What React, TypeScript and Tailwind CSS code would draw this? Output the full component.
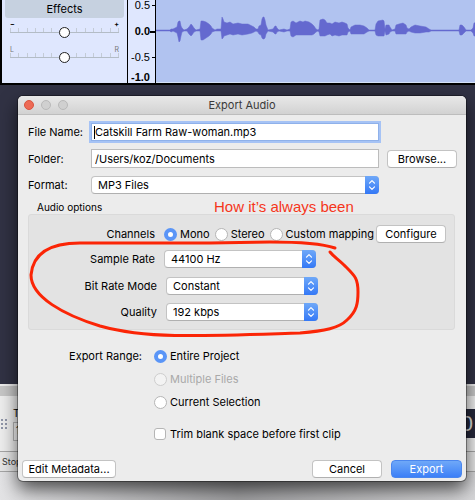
import React, { useId } from "react";

const buttonClass =
  "h-[18px] rounded-[4px] border border-[#c3c3c3] border-b-[#b0b0b0] bg-white text-center text-[11px] leading-4 whitespace-nowrap text-black";

/* x, height above the axis, height below the axis */
const envelope: [number, number, number][] = [
  [0, 0, 1], [14, 0, 1], [15, 1, 2], [17, 1, 1], [19, 2, 2], [21, 3, 3], [22, 8, 7], [23, 9, 12], [24, 9, 11], [25, 4, 6], [26, 2, 2], [28, 0, 1],
  [31, 1, 1], [33, 3, 4], [35, 6, 6], [36, 5, 5], [38, 2, 2], [40, 0, 1], [44, 1, 1], [45, 9, 10], [47, 9, 10], [50, 8, 8], [53, 6, 6], [55, 4, 4], [56, 2, 2],
  [59, 0, 1], [61, 1, 1], [65, 1, 1], [66, 13, 9], [67, 11, 8], [68, 8, 6], [71, 7, 5], [74, 8, 4], [77, 6, 5], [82, 7, 4], [86, 6, 5], [92, 6, 4],
  [96, 4, 3], [98, 3, 2], [100, 1, 1], [102, 1, 2], [103, 4, 4], [105, 5, 5], [106, 11, 8], [107, 13, 9], [108, 13, 9], [109, 10, 8], [110, 5, 4], [112, 0, 1],
  [117, 1, 2], [119, 4, 4], [120, 4, 4], [121, 2, 2], [123, 0, 1], [128, 1, 2], [131, 0, 1], [134, 1, 1], [135, 8, 6], [137, 9, 7], [140, 7, 5], [144, 9, 5],
  [147, 8, 5], [149, 9, 5], [153, 8, 5], [156, 6, 5], [158, 4, 4], [160, 1, 2], [162, 0, 1], [163, 1, 2], [164, 10, 6], [167, 11, 6], [169, 10, 6], [171, 7, 5],
  [174, 7, 4], [176, 6, 6], [179, 8, 5], [183, 7, 6], [186, 8, 5], [189, 7, 5], [191, 6, 5], [192, 2, 2], [194, 0, 1], [195, 3, 4], [199, 5, 4], [204, 5, 4],
  [208, 4, 4], [211, 2, 2], [213, 0, 1], [219, 0, 1], [220, 6, 5], [222, 9, 6], [227, 10, 6], [228, 9, 6], [229, 1, 1], [230, 5, 5], [233, 5, 4], [234, 3, 2],
  [236, 0, 1], [239, 1, 1], [240, 5, 4], [243, 6, 4], [247, 7, 4], [250, 5, 4], [251, 2, 2], [253, 1, 1], [255, 3, 2], [259, 5, 3], [264, 4, 3], [270, 3, 2],
  [273, 1, 2], [275, 0, 1], [303, 0, 1], [304, 5, 5], [306, 5, 5], [308, 3, 3], [310, 0, 1], [315, 0, 1], [317, 2, 3], [318, 7, 6], [321, 8, 6],
];
const AXIS = 30;
const wavePoints = [
  ...envelope.map(([x, up]) => `${x},${AXIS - up}`),
  ...[...envelope].reverse().map(([x, , down]) => `${x},${AXIS + down}`),
].join(" ");

function TrackSlider({ label, left, right, faint }: { label: string; left: string; right: string; faint?: boolean }) {
  return (
    <div className="relative h-[25px] px-[5px]">
      <div className={`flex justify-between text-[7px] leading-[8px] ${faint ? "text-[#777]" : "font-bold text-black"}`}>
        <span>{left}</span>
        <span>{right}</span>
      </div>
      <div className="absolute inset-x-[5px] top-[7px] flex h-[5px] justify-between border-b border-[#b3bcc6]">
        {Array.from({ length: 14 }, (_, i) => (
          <i key={i} className="w-px bg-[#c3cbd6]" />
        ))}
      </div>
      <input
        type="range"
        aria-label={label}
        defaultValue={50}
        className="absolute top-[6px] left-[5px] h-[11px] w-[109px] appearance-none bg-transparent [&::-webkit-slider-thumb]:size-[11px] [&::-webkit-slider-thumb]:appearance-none [&::-webkit-slider-thumb]:rounded-full [&::-webkit-slider-thumb]:border [&::-webkit-slider-thumb]:border-[#222] [&::-webkit-slider-thumb]:bg-white"
      />
    </div>
  );
}

function PopUp({ id, value, className }: { id: string; value: string; className: string }) {
  return (
    <span className={`relative block h-[18px] ${className}`}>
      <select
        id={id}
        className="h-full w-full appearance-none rounded-[4px] border border-[#c3c3c3] border-b-[#b0b0b0] bg-white pl-[6px] text-[11px] leading-4 text-black"
      >
        <option>{value}</option>
      </select>
      <span className="pointer-events-none absolute inset-y-0 right-0 flex w-[14px] items-center justify-center rounded-r-[4px] bg-linear-to-b from-[#6fa8f8] to-[#3478f6]">
        <svg width="8" height="12" viewBox="0 0 8 12" fill="none" stroke="white" strokeWidth="1.2" strokeLinecap="round" strokeLinejoin="round">
          <path d="M1.5 4.2 4 1.7l2.5 2.5M1.5 7.8 4 10.3l2.5-2.5" />
        </svg>
      </span>
    </span>
  );
}

function Radio({ name, label, checked, disabled }: { name: string; label: string; checked?: boolean; disabled?: boolean }) {
  return (
    <label className={`flex items-center gap-[3px] whitespace-nowrap ${disabled ? "text-[#a9a9a9]" : ""}`}>
      <input
        type="radio"
        name={name}
        defaultChecked={checked}
        disabled={disabled}
        className="size-[13px] shrink-0 appearance-none rounded-full border border-[#b5b5b5] bg-white checked:border-4 checked:border-[#5a95f7] disabled:border-[#cdcdcd] disabled:bg-[#f3f3f3]"
      />
      {label}
    </label>
  );
}

function ExportDialog() {
  const id = useId();
  return (
    <section
      role="dialog"
      aria-label="Export Audio"
      className="absolute top-[96px] right-[9px] left-[18px] rounded-[5px] bg-[#ececec] text-[11px] leading-4 text-black shadow-[0_0_0_1px_rgba(0,0,0,0.35),0_8px_18px_rgba(0,0,0,0.65)]"
    >
      <header className="relative flex h-[19px] items-center justify-center rounded-t-[5px] border-b border-[#bdbdbd] bg-linear-to-b from-[#e8e8e8] to-[#d2d2d2] text-[#3a3a3a]">
        <div className="absolute left-[6px] flex gap-[7px]">
          <button aria-label="Close" className="size-[10px] rounded-full border border-[#d9543f] bg-[#ed6a55]" />
          <button aria-label="Minimize" className="size-[10px] rounded-full border border-[#b9b9b9] bg-[#d0d0d0]" />
          <button aria-label="Zoom" className="size-[10px] rounded-full border border-[#b9b9b9] bg-[#d0d0d0]" />
        </div>
        <h1>Export Audio</h1>
      </header>

      <form className="px-1 pb-[3px]" onSubmit={(e) => e.preventDefault()}>
        <div className="grid grid-cols-[55px_minmax(0,1fr)_70px] items-center gap-x-[8px] pt-[8px] pr-[5px] pl-[6px]">
          <label htmlFor={`${id}-name`} className="whitespace-nowrap">File Name:</label>
          <span className="relative block">
            <input
              id={`${id}-name`}
              defaultValue="Catskill Farm Raw-woman.mp3"
              className="block h-[18px] w-full border border-[#8fb1ea] bg-white pl-[3px] ring-2 ring-[#a6c3f5] outline-none"
            />
            <i className="absolute top-[3px] left-[3px] h-[13px] w-px bg-black" />
          </span>
          <span />
          <label htmlFor={`${id}-folder`} className="mt-[8px]">Folder:</label>
          <input
            id={`${id}-folder`}
            defaultValue="/Users/koz/Documents"
            className="mt-[8px] h-[19px] w-full border border-[#bcbcbc] bg-white pl-[3px] outline-none"
          />
          <button className={`${buttonClass} mt-[8px]`}>Browse...</button>
          <label htmlFor={`${id}-format`} className="mt-[8px]">Format:</label>
          <PopUp id={`${id}-format`} value="MP3 Files" className="mt-[8px]" />
        </div>

        <fieldset className="mt-[6px] mr-[7px] ml-[6px]">
          <legend className="pl-[9px] text-[10px] leading-[14px]">Audio options</legend>
          <div className="flex h-[116px] flex-col rounded-[3px] border border-[#dadada] bg-[#e3e3e3] pt-[10px]">
            <div className="flex items-center gap-[5px] pr-[7px]">
              <span className="mr-[4px] w-[126px] shrink-0 text-right">Channels</span>
              <Radio name="channels" label="Mono" checked />
              <Radio name="channels" label="Stereo" />
              <Radio name="channels" label="Custom mapping" />
              <button className={`${buttonClass} -ml-[3px] w-[70px] shrink-0`}>Configure</button>
            </div>
            <div className="mt-[7px] flex items-center gap-[9px]">
              <label htmlFor={`${id}-rate`} className="w-[126px] text-right">Sample Rate</label>
              <PopUp id={`${id}-rate`} value="44100 Hz" className="w-[152px]" />
            </div>
            <div className="mt-[9px] flex items-center gap-[9px]">
              <label htmlFor={`${id}-mode`} className="w-[128px] text-right">Bit Rate Mode</label>
              <PopUp id={`${id}-mode`} value="Constant" className="w-[152px]" />
            </div>
            <div className="mt-[8px] flex items-center gap-[9px]">
              <label htmlFor={`${id}-quality`} className="w-[128px] text-right">Quality</label>
              <PopUp id={`${id}-quality`} value="192 kbps" className="w-[152px]" />
            </div>
          </div>
        </fieldset>

        <div className="mt-[18px] flex gap-[12px]">
          <span className="w-[120px] text-right">Export Range:</span>
          <div className="flex flex-col gap-[7px]">
            <Radio name="range" label="Entire Project" checked />
            <Radio name="range" label="Multiple Files" disabled />
            <Radio name="range" label="Current Selection" />
            <label className="mt-[9px] flex items-center gap-[4px]">
              <input type="checkbox" className="size-[12px] appearance-none rounded-[3px] border border-[#b5b5b5] bg-white" />
              Trim blank space before first clip
            </label>
          </div>
        </div>

        <footer className="mt-[18px] flex gap-[9px]">
          <button className={`${buttonClass} w-[94px]`}>Edit Metadata...</button>
          <button className={`${buttonClass} ml-auto w-[70px]`}>Cancel</button>
          <button className="h-[18px] w-[71px] rounded-[4px] border border-[#4a86ee] bg-linear-to-b from-[#6fa8f8] to-[#3c7ff7] text-[11px] leading-4 text-white">
            Export
          </button>
        </footer>
      </form>
    </section>
  );
}

export default function App() {
  return (
    <main className="relative flex min-h-screen flex-col overflow-hidden bg-[#d9d9db] font-['Inter','Liberation_Sans',sans-serif]">
      <div className="flex h-[85px] border-b-2 border-black bg-[#b1c3f0]">
        <aside className="w-[128px] shrink-0 border-r border-l-2 border-black bg-[#dfe7fe] px-[3px]">
          <button className="mb-[3px] block h-[18px] w-full rounded-b-[3px] bg-[#c6d1e0] text-[11px] leading-4 text-black">Effects</button>
          <TrackSlider label="Gain" left="−" right="+" />
          <TrackSlider label="Pan" left="L" right="R" faint />
        </aside>
        <div className="flex w-[28px] shrink-0 flex-col items-end border-r border-black bg-[#dfe7fe] font-['Liberation_Sans',Arial,sans-serif] text-[11px] leading-[11px] text-black">
          <span className="flex items-center gap-[2px]">0.5<i className="h-px w-[3px] bg-black" /></span>
          <span className="mt-[15px] flex items-center font-bold">0.0<i className="h-[2px] w-[5px] bg-black" /></span>
          <span className="mt-[15px] flex items-center gap-[2px]">-0.5<i className="h-px w-[3px] bg-black" /></span>
          <span className="mt-[9px] pr-[5px] font-bold">-1.0</span>
        </div>
        <svg className="h-full min-w-0 flex-1 border-b border-[#d5e2f7]" aria-label="Waveform">
          <polygon points={wavePoints} fill="#6469cf" stroke="#6469cf" strokeWidth="0.5" />
        </svg>
      </div>

      <div className="h-[299px] bg-[#313244]" />

      <div className="flex h-[68px] flex-col border-b border-[#a5a5a5] bg-[#ededed]">
        <div className="h-[12px] border-t-2 border-[#ececec] bg-[#c6c6c6]" />
        <div className="flex flex-1 items-center justify-between">
          <div className="flex items-center gap-[6px] pl-px">
            <div className="grid grid-cols-2 gap-[2px]">
              {Array.from({ length: 6 }, (_, i) => (
                <i key={i} className="size-[2px] rounded-full bg-[#717891]" />
              ))}
            </div>
            <div className="text-[10px] leading-[14px] text-black">
              <div>T</div>
              <div className="mt-[2px] h-[19px] w-[40px] border border-[#b5b5b5] bg-[#f5f5f5] pl-[2px]">1</div>
            </div>
          </div>
          <div className="h-[29px] w-[80px] bg-[#25273a] pr-[2px] text-right font-['Liberation_Sans',sans-serif] text-[22px] leading-[29px] text-[#d8d8d8]">0</div>
        </div>
      </div>
      <div className="h-[20px] border-b border-[#a5a5a5] bg-[#e6e6e6] pl-[2px] text-[9px] leading-[19px] text-[#333]">Stop</div>
      <div className="flex-1 bg-linear-to-r from-[#e3e3e5] via-[#a0a0a2] to-[#d6d6d8]" />

      <ExportDialog />

      <div className="pointer-events-none absolute inset-0">
        <p className="absolute top-[198px] left-[214px] font-['Liberation_Sans',Arial,sans-serif] text-[15px] leading-[18px] whitespace-nowrap text-[#f5361b]">
          How it’s always been
        </p>
        <svg className="absolute inset-0" width="475" height="500" fill="none" stroke="#fb2506" strokeWidth="3" strokeLinecap="round" strokeLinejoin="round">
          <path d="M335 248C320 243 300 242 270 242L210 243H80C50 243 33 253 31 275C31 297 64 315 100 326C125 333 150 335 175 335.500C215 336 265 334 300 333C325 331 339 328 347 320C357 311 358 303 358 292C358 278 355 276 344 265C338 259 334 257 330 252" />
        </svg>
      </div>
    </main>
  );
}
